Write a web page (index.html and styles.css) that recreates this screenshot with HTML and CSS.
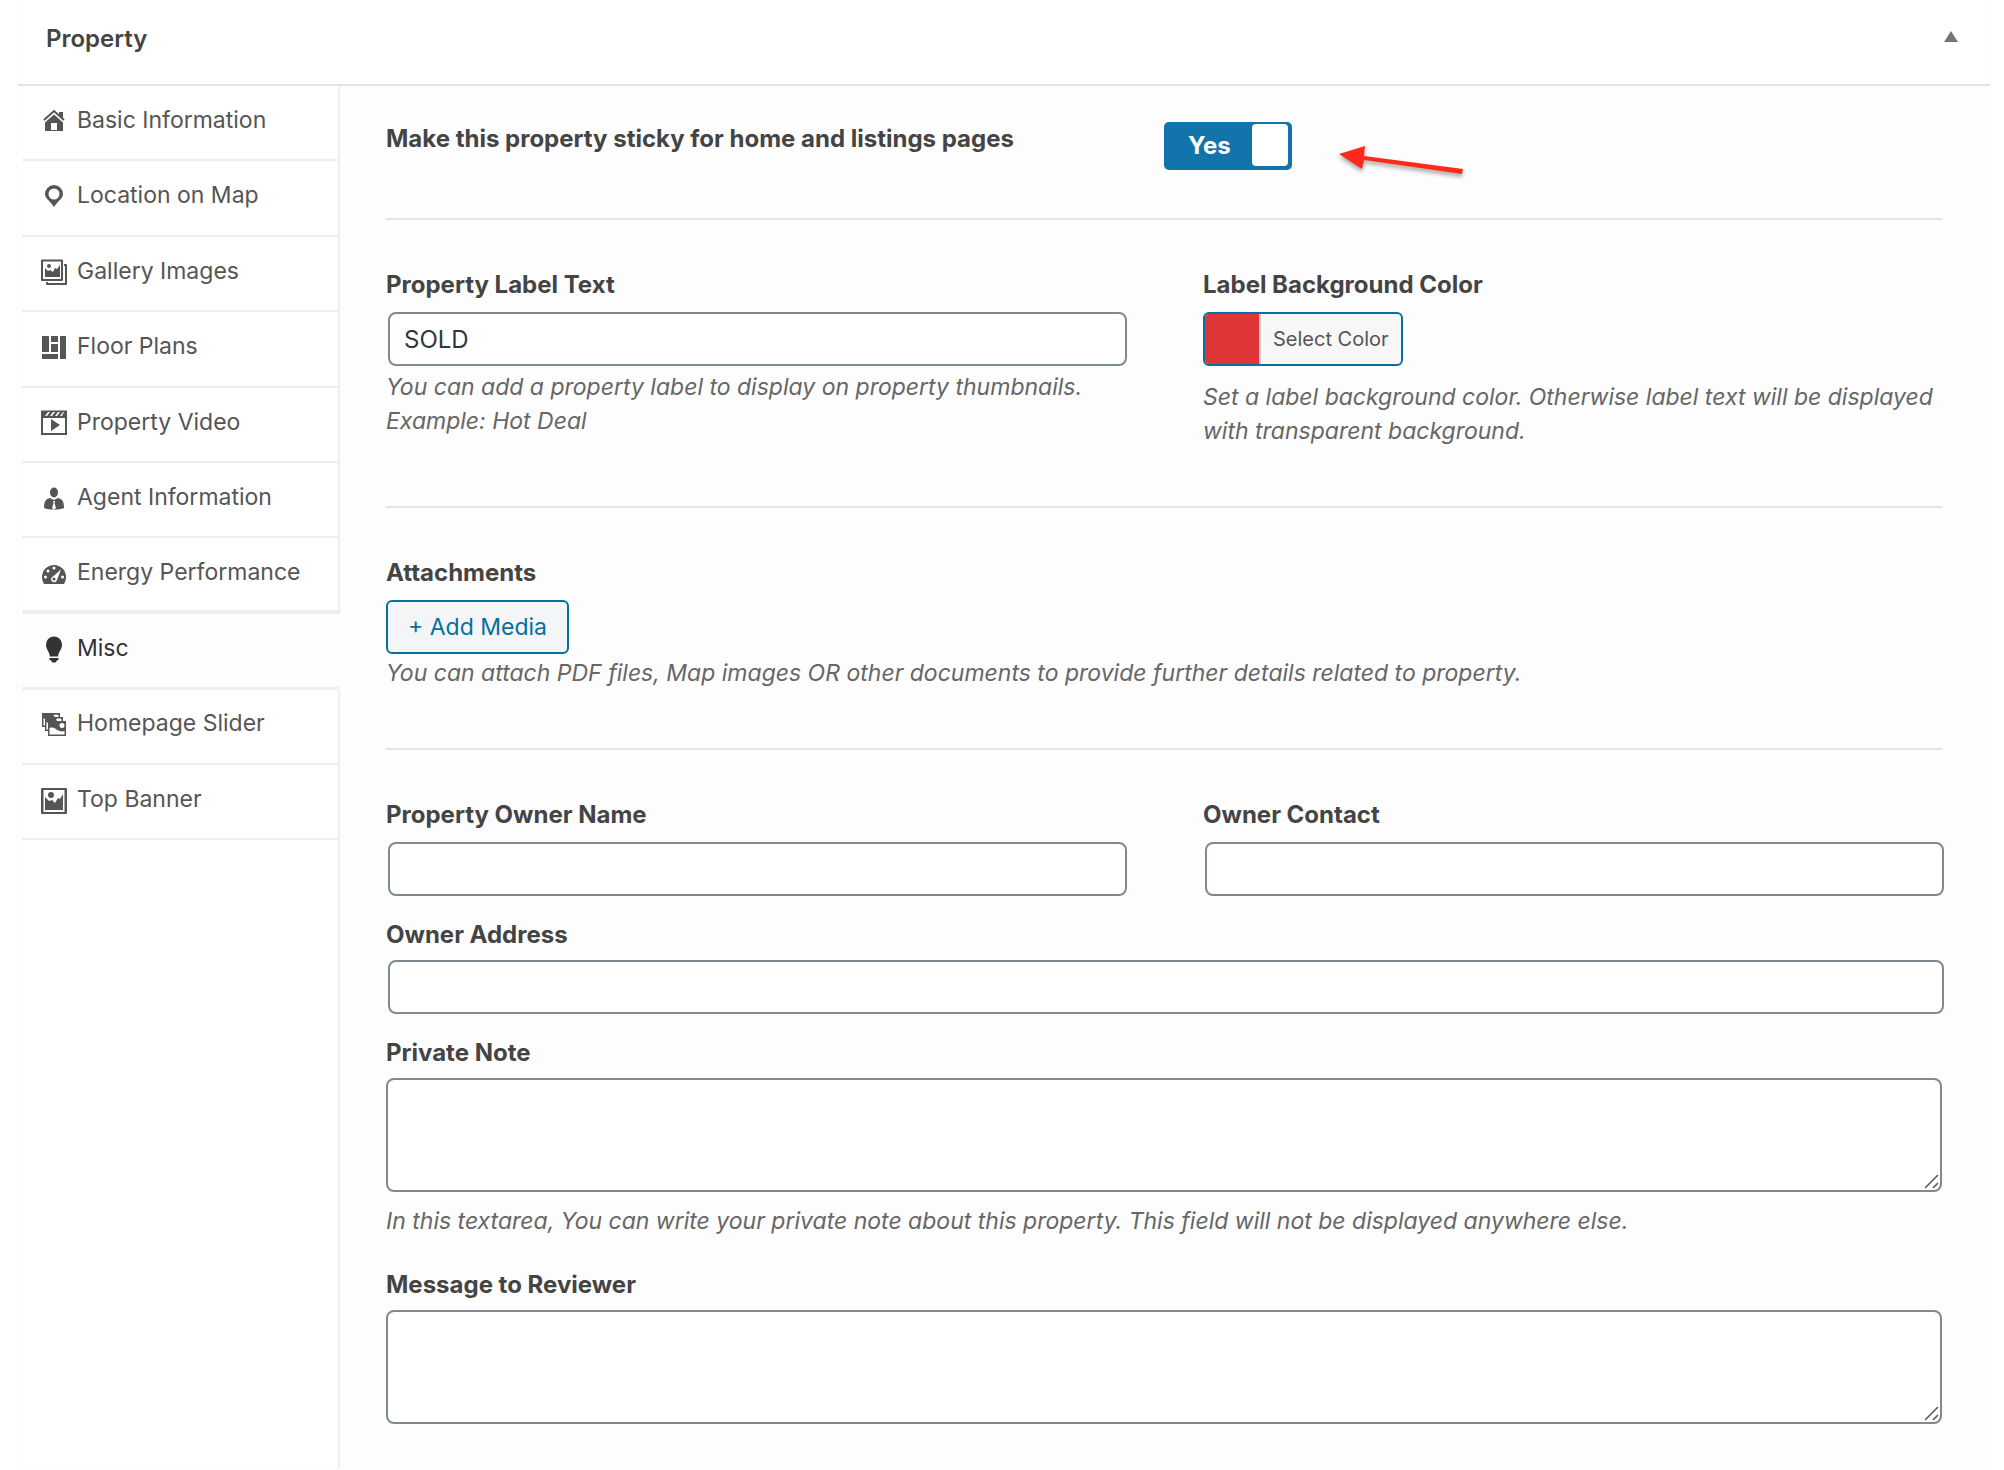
FILE: index.html
```html
<!DOCTYPE html>
<html lang="en">
<head>
<meta charset="utf-8">
<title>Property</title>
<meta name="viewport" content="width=device-width, initial-scale=1">
<link rel="stylesheet" href="styles.css">
</head>
<body>
<section class="postbox">
  <header class="postbox-header">
    <h2 class="postbox-title">Property</h2>
    <button type="button" class="toggle-panel" aria-label="Toggle panel" aria-expanded="true">
      <svg width="14" height="11" viewBox="0 0 14 11"><path d="M7 0 14 11H0z" fill="currentColor"/></svg>
    </button>
  </header>
  <div class="postbox-body">
    <nav class="tabs" aria-label="Property sections">
      <ul class="tab-list">
        <li class="tab"><a href="#basic">
          <svg class="icon" viewBox="0 0 28 28"><path d="M4 12 14 3l10 9" fill="none" stroke="currentColor" stroke-width="2"/><path fill-rule="evenodd" d="M19 4h4v7l-4-4zM14 6.500l9 8V23H5v-8.500zM11 15v7h6v-7z"/></svg>
          Basic Information</a></li>
        <li class="tab"><a href="#location">
          <svg class="icon" viewBox="0 0 28 28"><path fill-rule="evenodd" d="M14 2a9 9 0 0 1 9 9c0 4-4 6-9 13-5-7-9-9-9-13a9 9 0 0 1 9-9zm0 3.500a5.500 5.500 0 1 0 0 11 5.500 5.500 0 0 0 0-11z"/></svg>
          Location on Map</a></li>
        <li class="tab"><a href="#gallery">
          <svg class="icon" viewBox="0 0 28 28"><path fill-rule="evenodd" d="M2 0.500h20q1 0 1 1V21q0 1-1 1H2q-1 0-1-1V1.500q0-1 1-1zM3 2.500V20h18V2.500zM5 9l3 3 2-1 3 2 2-4 2 1 3-4v12H5z"/><circle cx="9" cy="7" r="2"/><path d="M24 5h2q1 0 1 1v19q0 1-1 1H7q-1 0-1-1v-2h2v1h17V7h-1z"/></svg>
          Gallery Images</a></li>
        <li class="tab"><a href="#floors">
          <svg class="icon" viewBox="0 0 28 28"><path d="M2 2h7v16H2zM11 2h7v6h-7zM11 10h7v8h-7zM20 2h6v23h-6zM2 20h16v5H2z"/></svg>
          Floor Plans</a></li>
        <li class="tab"><a href="#video">
          <svg class="icon" viewBox="0 0 28 28"><path fill-rule="evenodd" d="M1 0.500h26V25H1zM3 8v15h22V8zM5 6h2l3-4H8zM10 6h2l3-4h-2zM15 6h2l3-4h-2zM20 6h2l2-4h-1zM11 9l9 6-9 6z"/></svg>
          Property Video</a></li>
        <li class="tab"><a href="#agent">
          <svg class="icon" viewBox="0 0 28 28"><ellipse cx="14" cy="7.500" rx="4" ry="5"/><path fill-rule="evenodd" d="M10 13l4 2 4-2c4 1 6 3 6 10-5 2-15 2-20 0 0-7 2-9 6-10zm3 3 .500 2L12 23l2 1.500 2-1.500-1.500-5 .500-2z"/></svg>
          Agent Information</a></li>
        <li class="tab"><a href="#energy">
          <svg class="icon" viewBox="0 0 28 28"><path d="M14 5a12 12 0 0 1 12 12c0 3-1 5-2 7H4c-1-2-2-4-2-7A12 12 0 0 1 14 5z"/><g fill="#fff"><circle cx="14" cy="8" r="1.500"/><circle cx="8" cy="11" r="1.500"/><circle cx="5.500" cy="17" r="1.500"/><circle cx="22.500" cy="17" r="1.500"/><path d="M21 9.500 17 20a3 3 0 1 1-4-3.500z"/></g><circle cx="14" cy="19" r="1.500"/></svg>
          Energy Performance</a></li>
        <li class="tab tab-active"><a href="#misc" aria-current="page">
          <svg class="icon" viewBox="0 0 28 28"><path d="M14 0.500a8 8 0 0 1 8 8c0 5-3 6-4 12h-8c-1-6-4-7-4-12a8 8 0 0 1 8-8zM9.500 22h9v2h-1l-2 2.500h-3l-2-2.500h-1z"/></svg>
          Misc</a></li>
        <li class="tab"><a href="#slider">
          <svg class="icon" viewBox="0 0 28 28"><path d="M2 2h18v14H2z"/><path d="M3.500 7v7.500H5V8zM13 4q3-1 5.500 0v2H15z" fill="#fff"/><path d="M5 6h18v14H5z"/><path d="M6.500 11v7.500H8V12zM16 8.500q2-2 5.500-.500v2H17z" fill="#fff"/><path d="M8 10h18v15H8z"/><path d="M9.500 17c3-1 5 0 7 1.500s5 2.500 8 1.500v3.500h-15z" fill="#fff"/><circle cx="22" cy="14.500" r="2.500" fill="#fff"/></svg>
          Homepage Slider</a></li>
        <li class="tab"><a href="#banner">
          <svg class="icon" viewBox="0 0 28 28"><path fill-rule="evenodd" d="M2 1h24q1 0 1 1v24q0 1-1 1H2q-1 0-1-1V2q0-1 1-1zM3.500 3v22h21V3zM5 10l4 4 3-1 3 3 3-5 2 1 3-5v16H5z"/><circle cx="11" cy="8" r="3"/></svg>
          Top Banner</a></li>
      </ul>
    </nav>

    <form class="panel">
      <div class="section section-sticky">
        <label class="field-label" for="sticky">Make this property sticky for home and listings pages</label>
        <div class="switch-row">
          <label class="switch">
            <input type="checkbox" role="switch" id="sticky" class="switch-input" checked>
            <span class="switch-text">Yes</span>
            <span class="switch-handle"></span>
          </label>
          <svg class="arrow" width="134" height="30" viewBox="0 0 134 30"><path d="M1 14 27 6l-1 10 99 13-1 5-98-14-2 9z"/></svg>
        </div>
      </div>

      <div class="section columns">
        <div class="field">
          <label class="field-label" for="label-text">Property Label Text</label>
          <input class="text-input" type="text" id="label-text" value="SOLD">
          <p class="description">You can add a property label to display on property thumbnails. Example: Hot Deal</p>
        </div>
        <div class="field">
          <label class="field-label" for="label-color">Label Background Color</label>
          <button type="button" class="color-button" id="label-color"><span class="color-swatch"></span><span class="color-text">Select Color</span></button>
          <p class="description description-spaced">Set a label background color. Otherwise label text will be displayed with transparent background.</p>
        </div>
      </div>

      <div class="section field">
        <label class="field-label" for="add-media">Attachments</label>
        <button type="button" class="media-button" id="add-media">+ Add Media</button>
        <p class="description description-close">You can attach PDF files, Map images OR other documents to provide further details related to property.</p>
      </div>

      <div class="section section-owner">
        <div class="columns">
          <div class="field">
            <label class="field-label" for="owner-name">Property Owner Name</label>
            <input class="text-input" type="text" id="owner-name">
          </div>
          <div class="field">
            <label class="field-label" for="owner-contact">Owner Contact</label>
            <input class="text-input" type="text" id="owner-contact">
          </div>
        </div>
        <div class="field field-tight">
          <label class="field-label" for="owner-address">Owner Address</label>
          <input class="text-input" type="text" id="owner-address">
        </div>
        <div class="field field-tight">
          <label class="field-label" for="private-note">Private Note</label>
          <textarea class="text-area" id="private-note"></textarea>
          <p class="description description-note">In this textarea, You can write your private note about this property. This field will not be displayed anywhere else.</p>
        </div>
        <div class="field field-tight">
          <label class="field-label" for="reviewer-message">Message to Reviewer</label>
          <textarea class="text-area" id="reviewer-message"></textarea>
        </div>
      </div>
    </form>
  </div>
</section>
</body>
</html>
```
FILE: styles.css
```css
* { box-sizing: border-box; }

body {
  margin: 0;
  padding: 0 14px 2px 18px;
  background: #fff;
  color: #444;
  font: 24px/34px Inter, "Liberation Sans", sans-serif;
}

h2, p, ul { margin: 0; padding: 0; }

button, input, textarea { font: inherit; }

.postbox { box-shadow: 0 0 0 1px #fafafa; }

.postbox-header {
  display: flex;
  justify-content: space-between;
  align-items: flex-start;
  padding: 22px 32px 28px 28px;
  border-bottom: 2px solid #e2e4e7;
}

.postbox-title {
  font-size: 24px;
  line-height: 34px;
  font-weight: 600;
}

.toggle-panel {
  display: flex;
  padding: 9px 0;
  border: 0;
  background: none;
  color: #72777c;
}

.postbox-body {
  display: flex;
  padding: 0 4px;
}

/* Sidebar tabs */
.tabs {
  flex: 0 0 318px;
  border-right: 2px solid #eee;
}

.tab-list {
  display: grid;
  grid-auto-rows: 1fr;
  height: 754px;
  list-style: none;
}

.tab { border-bottom: 2px solid #eee; }

.tab a {
  display: flex;
  align-items: flex-start;
  gap: 9px;
  padding: 17px 0 0 18px;
  color: #555;
  font-size: 23px;
  text-decoration: none;
  white-space: nowrap;
}

.tab-active {
  margin-right: -2px;
  background: #fdfdfd;
  box-shadow: 0 -4px #eee, 0 2px #f6f6f6;
}

.tab-active a { color: #333; }

.icon {
  flex: none;
  width: 28px;
  height: 28px;
  margin-top: 5px;
  fill: currentColor;
}

/* Settings panel */
.panel {
  flex: 1;
  min-width: 0;
  padding: 36px 44px 44px 46px;
  background: #fdfdfd;
}

.section {
  padding: 48px 0 58px;
  border-bottom: 2px solid #e5e5e5;
}

.section-sticky {
  display: grid;
  grid-template-columns: 1fr 1fr;
  padding: 0 0 48px;
}

.section-owner {
  display: grid;
  gap: 22px;
  padding-bottom: 0;
  border-bottom: 0;
}

.columns {
  display: grid;
  grid-template-columns: 1fr 1fr;
  gap: 78px;
}

.field-label {
  display: block;
  font-weight: 700;
}

.field .field-label { margin-bottom: 10px; }

.field-tight .field-label { margin-bottom: 8px; }

.switch-row {
  display: flex;
  align-items: flex-start;
  gap: 46px;
}

.switch {
  position: relative;
  display: flex;
  justify-content: space-between;
  width: 128px;
  height: 48px;
  padding: 2px 4px 4px 24px;
  border-radius: 5px;
  background: #1174aa;
}

.switch-input {
  position: absolute;
  inset: 0;
  margin: 0;
  opacity: 0;
}

.switch-text {
  color: #fff;
  font-weight: 700;
  line-height: 44px;
}

.switch-handle {
  width: 36px;
  border-radius: 4px;
  background: #fff;
}

.arrow {
  margin-top: 18px;
  overflow: visible;
  fill: #ff2a1c;
  filter: drop-shadow(0 3px 2px rgba(0, 0, 0, 0.35));
}

.text-input {
  display: block;
  width: 100%;
  height: 54px;
  margin: 0 0 0 2px;
  padding: 0 14px;
  border: 2px solid #7e8993;
  border-radius: 8px;
  background: #fff;
  color: #32373c;
}

.text-area {
  display: block;
  width: 100%;
  height: 114px;
  padding: 4px 14px;
  border: 2px solid #7e8993;
  border-radius: 8px;
  background: #fff;
  color: #32373c;
  resize: vertical;
}

.text-area::-webkit-resizer {
  background: url("data:image/svg+xml,%3Csvg xmlns='http://www.w3.org/2000/svg' width='15' height='15'%3E%3Cpath d='M0 13 13 0M8 13l5-5' stroke='%23555' stroke-width='1.500'/%3E%3C/svg%3E") no-repeat;
}

.description {
  margin-top: 4px;
  color: #666;
  font-size: 23px;
  font-style: italic;
}

.description-close { margin-top: 2px; }

.description-spaced { margin-top: 14px; }

.description-note { margin: 12px 0 8px; }

.color-button {
  display: flex;
  height: 54px;
  padding: 0;
  overflow: hidden;
  border: 2px solid #0071a1;
  border-radius: 6px;
  background: #f7f7f7;
  color: #555;
}

.color-swatch {
  width: 56px;
  border-right: 2px solid #ccc;
  background: #dd3538;
}

.color-text {
  padding: 0 12px;
  font-size: 20px;
  line-height: 50px;
}

.media-button {
  display: block;
  height: 54px;
  padding: 0 20px;
  border: 2px solid #0071a1;
  border-radius: 6px;
  background: #f3f5f6;
  color: #0071a1;
  font-size: 23px;
}
```
